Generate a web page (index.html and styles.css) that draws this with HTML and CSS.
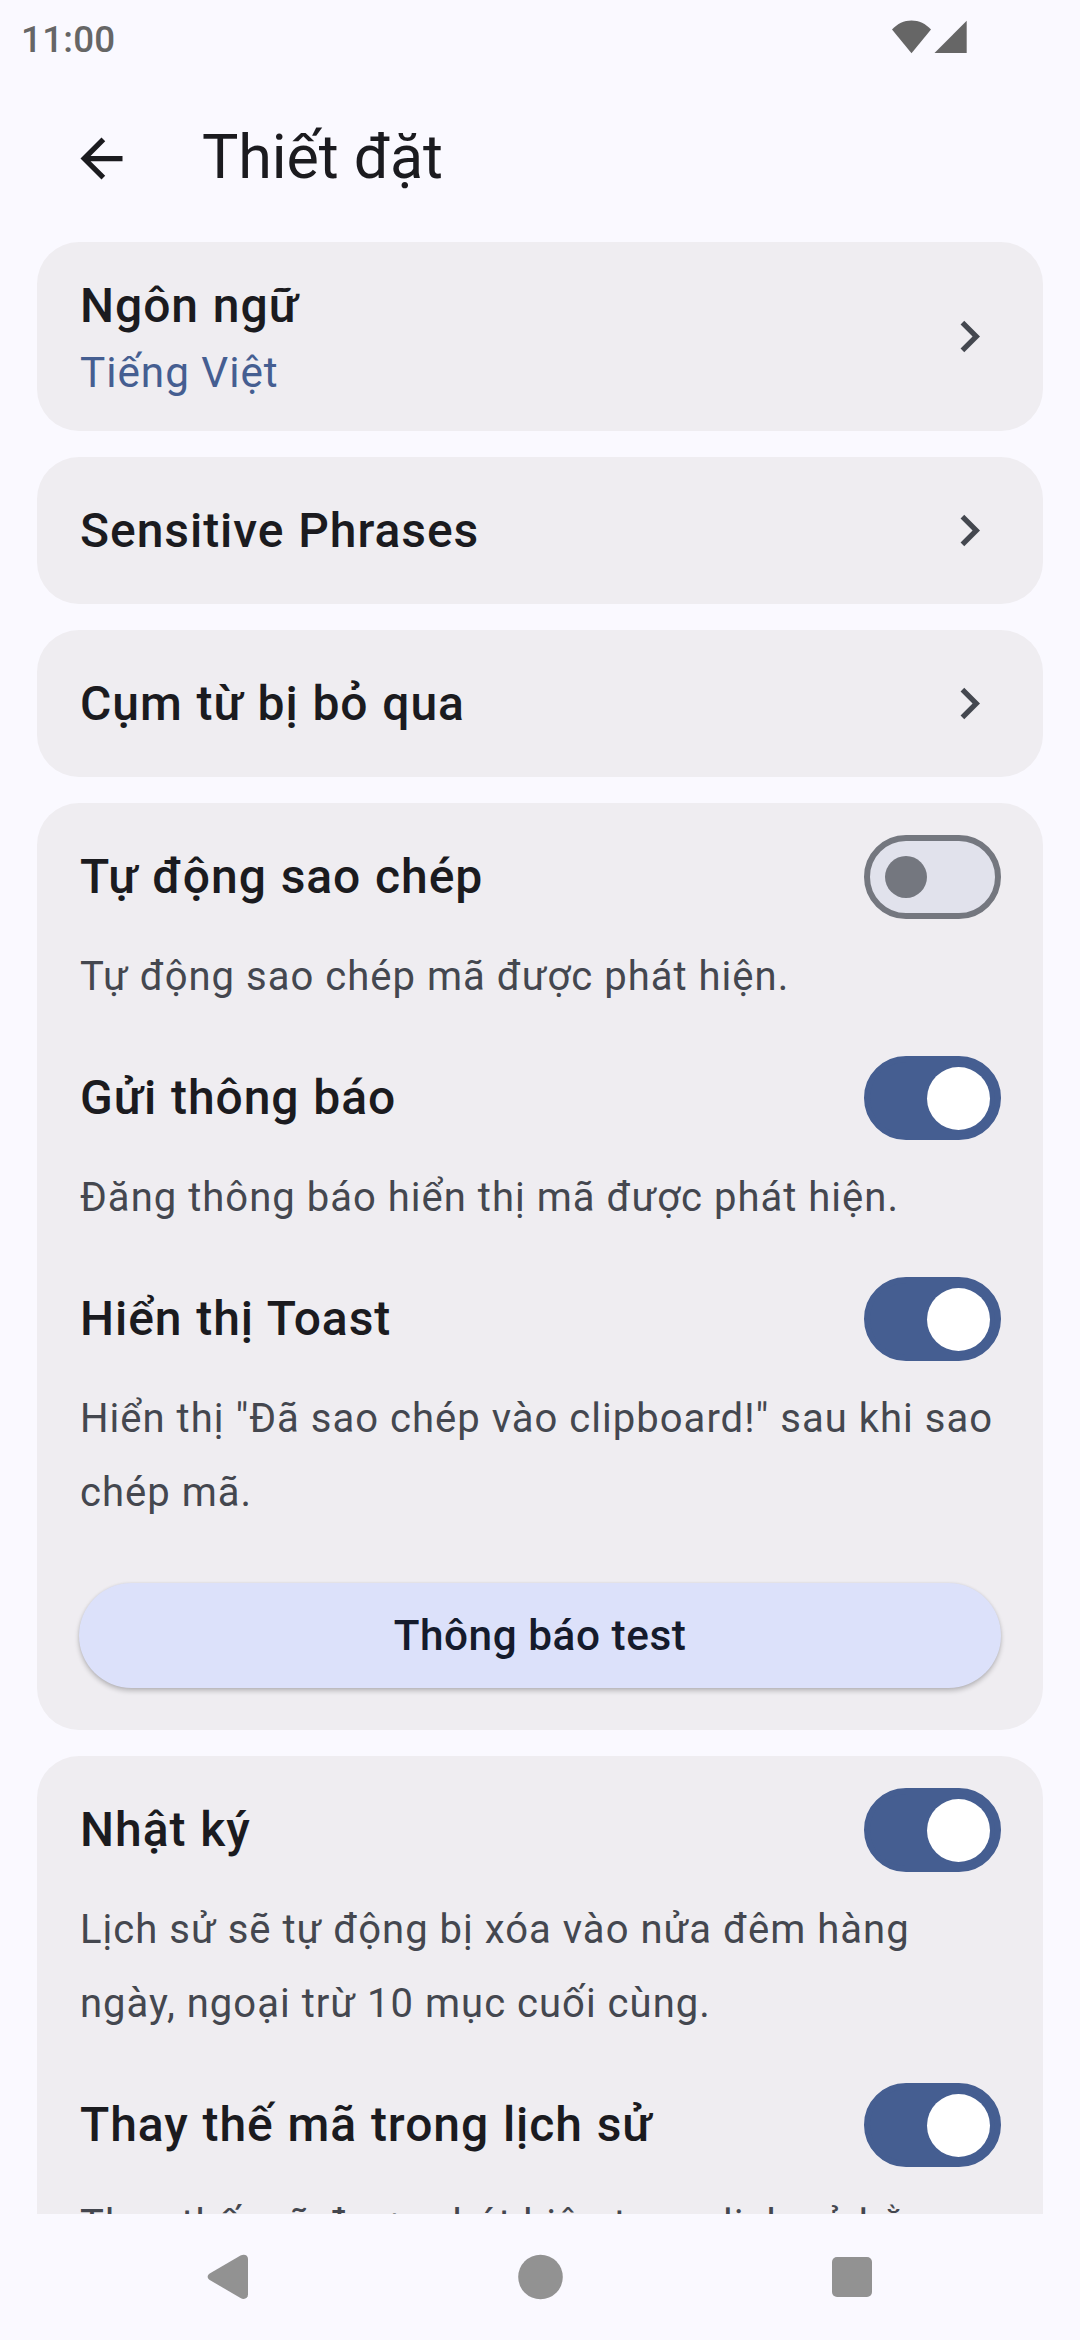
FILE: index.html
```
<!DOCTYPE html>
<html lang="vi">
<head>
<meta charset="utf-8">
<title>Thiết đặt</title>
<link rel="stylesheet" href="styles.css">
</head>
<body>
<div class="screen">
  <header class="status">
    <span class="clock">11:00</span>
    <svg class="signals" viewBox="0 0 75 34" aria-hidden="true">
      <path d="M19.5 33.2 0 9.4C5.4 3.8 12 .5 19.5.5S33.600 3.8 39 9.400Z"/>
      <path d="M42.500 33 74.700 .700V33Z"/>
    </svg>
  </header>

  <div class="appbar">
    <svg class="back" viewBox="0 0 24 24" aria-hidden="true"><path d="M20 11H7.830l5.590-5.590L12 4l-8 8 8 8 1.410-1.410L7.830 13H20z"/></svg>
    <h1 class="page-title">Thiết đặt</h1>
  </div>

  <main class="list">
    <section class="card link tall">
      <div class="link-text">
        <h2 class="title">Ngôn ngữ</h2>
        <p class="value">Tiếng Việt</p>
      </div>
      <svg class="chevron" viewBox="0 0 24 24" aria-hidden="true"><path d="M10 6 8.590 7.410 13.170 12l-4.580 4.590L10 18l6-6z"/></svg>
    </section>

    <section class="card link">
      <h2 class="title">Sensitive Phrases</h2>
      <svg class="chevron" viewBox="0 0 24 24" aria-hidden="true"><path d="M10 6 8.590 7.410 13.170 12l-4.580 4.590L10 18l6-6z"/></svg>
    </section>

    <section class="card link">
      <h2 class="title">Cụm từ bị bỏ qua</h2>
      <svg class="chevron" viewBox="0 0 24 24" aria-hidden="true"><path d="M10 6 8.590 7.410 13.170 12l-4.580 4.590L10 18l6-6z"/></svg>
    </section>

    <section class="card group">
      <div class="option">
        <div class="row"><h2 class="title">Tự động sao chép</h2><span class="switch"><i class="thumb"></i></span></div>
        <p class="desc">Tự động sao chép mã được phát hiện.</p>
      </div>
      <div class="option">
        <div class="row"><h2 class="title">Gửi thông báo</h2><span class="switch on"><i class="thumb"></i></span></div>
        <p class="desc">Đăng thông báo hiển thị mã được phát hiện.</p>
      </div>
      <div class="option">
        <div class="row"><h2 class="title">Hiển thị Toast</h2><span class="switch on"><i class="thumb"></i></span></div>
        <p class="desc">Hiển thị "Đã sao chép vào clipboard!" sau khi sao<br>chép mã.</p>
      </div>
      <button class="button" type="button">Thông báo test</button>
    </section>

    <section class="card group">
      <div class="option">
        <div class="row"><h2 class="title">Nhật ký</h2><span class="switch on"><i class="thumb"></i></span></div>
        <p class="desc">Lịch sử sẽ tự động bị xóa vào nửa đêm hàng<br>ngày, ngoại trừ 10 mục cuối cùng.</p>
      </div>
      <div class="option">
        <div class="row"><h2 class="title">Thay thế mã trong lịch sử</h2><span class="switch on"><i class="thumb"></i></span></div>
        <p class="desc">Thay thế mã được phát hiện trong lịch sử bằng</p>
      </div>
    </section>
  </main>

  <nav class="navbar">
    <svg class="nav-icon" viewBox="0 0 48 48" aria-hidden="true"><path d="M5.700 20.500 36.500 2.600C40 .600 44 2 44 6V41.500C44 45.500 40 47 36.500 45L5.700 27C3 25.400 3 22.100 5.700 20.500Z"/></svg>
    <svg class="nav-icon" viewBox="0 0 48 48" aria-hidden="true"><circle cx="24.500" cy="24" r="22.300"/></svg>
    <svg class="nav-icon" viewBox="0 0 48 48" aria-hidden="true"><rect x="4" y="4" width="40" height="40" rx="5"/></svg>
  </nav>
</div>
</body>
</html>
```
FILE: styles.css
```
* {
  box-sizing: border-box;
}

body,
h1,
h2,
p {
  margin: 0;
}

body {
  background: #faf9ff;
  font-family: Roboto, "Noto Sans", sans-serif;
  color: #1b1b1f;
}

.screen {
  display: flex;
  flex-direction: column;
  width: 1080px;
  height: 2340px;
  overflow: hidden;
}

/* Status bar */
.status {
  display: flex;
  flex: none;
  align-items: center;
  justify-content: space-between;
  height: 79px;
  padding: 0 113px 0 21px;
  color: #666;
}

.clock {
  font-size: 36.75px;
  font-weight: 500;
  letter-spacing: 0.25px;
}

.signals {
  width: 75px;
  height: 34px;
  margin-bottom: 6px;
  fill: #666;
}

/* App bar */
.appbar {
  display: flex;
  flex: none;
  align-items: center;
  gap: 69px;
  height: 163px;
  padding: 0 70px 5px;
}

.back {
  width: 63px;
  height: 63px;
  fill: #1b1b1f;
}

.page-title {
  padding-bottom: 2px;
  font-size: 61px;
  font-weight: 400;
  line-height: 74px;
  letter-spacing: -0.1px;
}

/* Settings cards */
.list {
  display: flex;
  flex: 1;
  flex-direction: column;
  gap: 26px;
  min-height: 0;
  padding: 0 37px;
  overflow: hidden;
}

.card {
  flex: none;
  border-radius: 42px;
  background: #efedf1;
}

.link {
  display: flex;
  align-items: center;
  justify-content: space-between;
  height: 147px;
  padding: 0 42px;
}

.tall {
  height: 189px;
}

.title {
  padding-left: 1px;
  font-size: 48px;
  font-weight: 500;
  line-height: 72px;
  letter-spacing: 0.95px;
  word-spacing: 0.9px;
}

.value {
  padding-left: 1px;
  font-size: 42.3px;
  line-height: 61px;
  letter-spacing: 0.96px;
  color: #455e91;
}

.chevron {
  width: 63px;
  height: 63px;
  fill: #44474f;
}

.group {
  display: flex;
  flex-direction: column;
  gap: 42px;
  padding: 32px 42px 42px;
}

.row {
  display: flex;
  align-items: center;
  justify-content: space-between;
  height: 84px;
  margin-bottom: 21px;
}

.desc {
  padding-left: 1px;
  font-size: 40px;
  line-height: 74px;
  letter-spacing: 1.02px;
  white-space: nowrap;
  color: #44474f;
}

/* Switches */
.switch {
  display: flex;
  align-items: center;
  width: 137px;
  height: 84px;
  padding-left: 15px;
  border: 6px solid #74777f;
  border-radius: 42px;
  background: #e1e2ec;
}

.thumb {
  width: 42px;
  height: 42px;
  border-radius: 50%;
  background: #74777f;
}

.on {
  justify-content: flex-end;
  padding: 0 5px 0 0;
  border-color: #455e91;
  background: #455e91;
}

.on .thumb {
  width: 63px;
  height: 63px;
  background: #fff;
}

.button {
  height: 105px;
  margin-top: 11px;
  border: 0;
  border-radius: 53px;
  background: #dce1fa;
  box-shadow: 0 3px 5px rgba(0, 0, 0, 0.22), 0 0 3px rgba(0, 0, 0, 0.08);
  font: 500 42.3px/60px Roboto, "Noto Sans", sans-serif;
  letter-spacing: 0.55px;
  color: #151b2c;
}

/* System navigation */
.navbar {
  display: flex;
  flex: none;
  justify-content: space-between;
  height: 126px;
  padding: 39px 204px 0;
}

.nav-icon {
  width: 48px;
  height: 48px;
  fill: #929292;
}
```
